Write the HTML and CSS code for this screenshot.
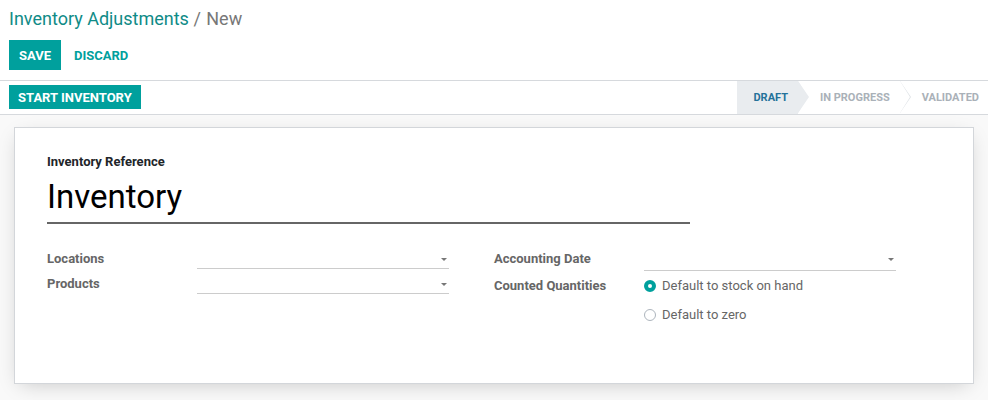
FILE: index.html
```html
<!DOCTYPE html>
<html lang="en">
<head>
  <meta charset="UTF-8" />
  <title>Inventory Adjustments / New</title>
  <link rel="stylesheet" href="styles.css">
</head>
<body>
  <div class="control-panel">
    <div class="cp-top">
      <div class="breadcrumb">
        <a href="#">Inventory Adjustments</a>
        <span class="sep">/</span>
        <span class="active">New</span>
      </div>
      <div class="cp-buttons">
        <button class="btn btn-primary">Save</button>
        <button class="btn btn-link">Discard</button>
      </div>
    </div>
  </div>

  <div class="status-row">
    <button class="btn btn-primary btn-sm">Start Inventory</button>
    <div class="statusbar">
      <span class="status-item current">Draft</span>
      <span class="status-item">In Progress</span>
      <span class="status-item last">Validated</span>
    </div>
  </div>

  <div class="content">
    <div class="sheet">
      <div class="title">
        <label class="title-label">Inventory Reference</label>
        <div class="name-field">Inventory</div>
      </div>

      <div class="groups">
        <div class="group">
          <div class="field-label">Locations</div>
          <div class="field select"><span class="caret"></span></div>
          <div class="field-label">Products</div>
          <div class="field select"><span class="caret"></span></div>
        </div>

        <div class="group">
          <div class="field-label">Accounting Date</div>
          <div class="field select date"><span class="caret"></span></div>
          <div class="field-label">Counted Quantities</div>
          <div class="radios">
            <div class="radio-option"><span class="radio checked"></span>Default to stock on hand</div>
            <div class="radio-option"><span class="radio"></span>Default to zero</div>
          </div>
        </div>
      </div>
    </div>
  </div>
</body>
</html>
```

FILE: styles.css
```css
* { box-sizing: border-box; }

html, body {
  height: 100%;
}

body {
  margin: 0;
  font-family: Roboto, "Liberation Sans", sans-serif;
  font-size: 13px;
  line-height: 1.5;
  color: #4c4c4c;
  background: #f9f9f9;
}

/* Control panel */
.control-panel {
  background: #fff;
  border-bottom: 1px solid #d6d9dd;
}

.cp-top {
  padding: 7px 9px 10px;
}

.breadcrumb {
  font-size: 18px;
  line-height: 24px;
}

.breadcrumb a {
  color: #0f8b87;
  text-decoration: none;
}

.breadcrumb .sep {
  color: #777;
  margin: 0 1px 0 0;
}

.breadcrumb .active {
  color: #777;
}

.cp-buttons {
  display: flex;
  margin-top: 9px;
}

.btn {
  font-family: inherit;
  font-size: 13px;
  font-weight: bold;
  text-transform: uppercase;
  border: none;
  border-radius: 0;
  height: 30px;
  padding: 0 10px;
  cursor: pointer;
}

.btn-primary {
  background: #00a09d;
  color: #fff;
}

.btn-link {
  background: none;
  color: #00a09d;
  margin-left: 3px;
}

.btn-sm {
  height: 24px;
  padding: 0 9px;
  margin: 4px 0 0 9px;
  align-self: flex-start;
}

/* Status bar row */
.status-row {
  display: flex;
  justify-content: space-between;
  background: #fff;
  border-bottom: 1px solid #d6d9dd;
  height: 34px;
}

.statusbar {
  display: flex;
}

.status-item {
  position: relative;
  padding: 0 10px 0 22px;
  line-height: 33px;
  font-size: 11px;
  font-weight: bold;
  text-transform: uppercase;
  color: #aab1b8;
}

.status-item.current {
  padding-left: 16px;
  background: #e9ecef;
  color: #24729a;
}

.status-item::before,
.status-item::after {
  content: '';
  position: absolute;
  top: 0;
  z-index: 1;
  border-top: 16.5px solid transparent;
  border-bottom: 16.5px solid transparent;
}

.status-item::before {
  right: -11px;
  border-left: 11px solid #dee2e6;
}

.status-item::after {
  right: -10px;
  border-left: 10px solid #fff;
}

.status-item.current::before {
  border-left-color: #e9ecef;
}

.status-item.current::after {
  border-left-color: #e9ecef;
}

.status-item.last {
  padding-right: 9px;
}

.status-item.last::before,
.status-item.last::after {
  display: none;
}

/* Sheet */
.content {
  padding: 12px 14px 0;
}

.sheet {
  background: #fff;
  border: 1px solid #d3d6da;
  box-shadow: 0 5px 20px -6px rgba(0, 0, 0, 0.22);
  padding: 24px 32px 58px;
}

.title-label {
  display: block;
  font-weight: bold;
  color: #212529;
}

.name-field {
  width: 643px;
  margin-top: 5px;
  font-size: 33px;
  line-height: 40px;
  color: #000;
  padding-bottom: 5px;
  border-bottom: 2px solid #666;
}

.groups {
  display: flex;
  margin-top: 25px;
}

.group {
  width: 447px;
  display: grid;
  grid-template-columns: 150px 252px;
  row-gap: 5px;
  align-content: start;
}

.field-label {
  font-weight: bold;
  color: #666;
  height: 20px;
}

.field {
  position: relative;
  height: 20px;
  border-bottom: 1px solid #ccc;
}

.field.date {
  height: 22px;
}

.caret {
  position: absolute;
  right: 2px;
  top: 9px;
  border-top: 3px solid #777;
  border-left: 3px solid transparent;
  border-right: 3px solid transparent;
}

.radios {
  display: flex;
  flex-direction: column;
  row-gap: 9px;
}

.radio-option {
  display: flex;
  align-items: center;
  height: 20px;
  color: #666;
}

.radio {
  width: 12px;
  height: 12px;
  border-radius: 50%;
  border: 1px solid #adb5bd;
  margin-right: 6px;
  flex-shrink: 0;
}

.radio.checked {
  border: 4px solid #00a09d;
  background: #fff;
}
```
